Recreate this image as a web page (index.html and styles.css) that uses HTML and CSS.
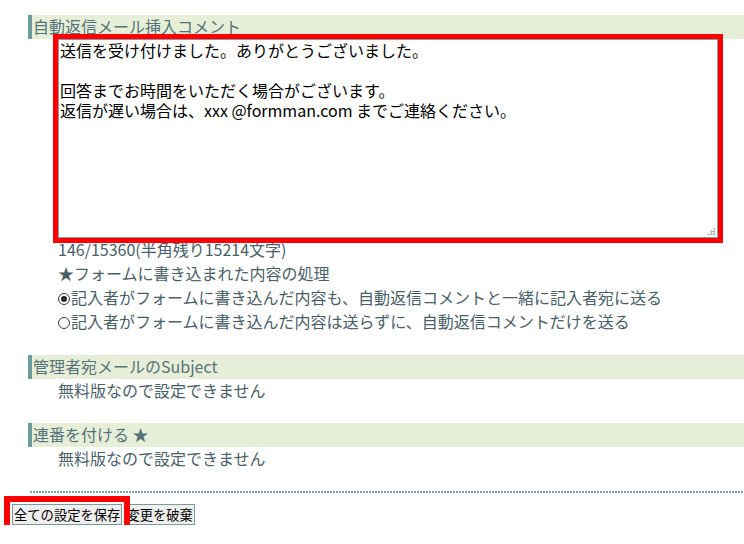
FILE: index.html
```html
<!DOCTYPE html>
<html lang="ja">
<head>
<meta charset="utf-8">
<title>設定</title>
<link rel="stylesheet" href="styles.css">
</head>
<body>
<div class="page">
  <section class="sec sec-first">
    <h2 class="sec-title">自動返信メール挿入コメント</h2>
    <div class="sec-body">
      <div class="ta-wrap">
        <textarea class="ta">送信を受け付けました。ありがとうございました。

回答までお時間をいただく場合がございます。
返信が遅い場合は、xxx @formman.com までご連絡ください。</textarea>
        <span class="grip"></span>
      </div>
      <p class="line">146/15360(半角残り15214文字)</p>
      <p class="line">★フォームに書き込まれた内容の処理</p>
      <p class="line"><span class="radio checked"></span>記入者がフォームに書き込んだ内容も、自動返信コメントと一緒に記入者宛に送る</p>
      <p class="line"><span class="radio"></span>記入者がフォームに書き込んだ内容は送らずに、自動返信コメントだけを送る</p>
    </div>
  </section>
  <section class="sec">
    <h2 class="sec-title">管理者宛メールのSubject</h2>
    <div class="sec-body">
      <p class="line">無料版なので設定できません</p>
    </div>
  </section>
  <section class="sec">
    <h2 class="sec-title">連番を付ける ★</h2>
    <div class="sec-body">
      <p class="line">無料版なので設定できません</p>
    </div>
  </section>
  <div class="sep"></div>
  <div class="actions">
    <button class="btn btn-save" type="button">全ての設定を保存</button><button class="btn btn-discard" type="button">変更を破棄</button>
  </div>
</div>
</body>
</html>
```

FILE: styles.css
```css
html, body {
  margin: 0;
  padding: 0;
  background: #ffffff;
}
body {
  font-family: "Noto Sans CJK JP", "Noto Sans", sans-serif;
  font-size: 16px;
  color: #4a6068;
}
.page {
  padding: 15px 0 0 28px;
}
.sec {
  margin: 0 0 20px 0;
}
.sec-first {
  margin-bottom: 21px;
}
.sec-title {
  margin: 0;
  height: 22px;
  line-height: 22px;
  padding-bottom: 2px;
  font-size: 16px;
  font-weight: normal;
  color: #557279;
  background: #e6eed8;
  border-left: 4px solid #6a9c9c;
  padding-left: 1px;
  white-space: nowrap;
}
.sec-body {
  padding-left: 30px;
}
.line {
  margin: 0;
  height: 22px;
  line-height: 22px;
  padding-bottom: 2px;
  white-space: nowrap;
}
.ta-wrap {
  position: relative;
  width: 660px;
  height: 199px;
  outline: 5px solid #ff0000;
}
.ta {
  display: block;
  box-sizing: border-box;
  width: 660px;
  height: 199px;
  margin: 0;
  padding: 0 1px;
  border: 1px solid #8a9a9e;
  resize: none;
  font-family: "Noto Sans CJK JP", sans-serif;
  font-weight: 400;
  font-size: 16px;
  line-height: 20px;
  color: #000000;
  background: #ffffff;
  overflow: hidden;
}
.grip {
  position: absolute;
  right: 3px;
  bottom: 3px;
  width: 8px;
  height: 8px;
  background:
    radial-gradient(circle, #b0b0b0 1.2px, transparent 1.3px) 0 0 / 3px 3px;
  clip-path: polygon(100% 0, 100% 100%, 0 100%);
}
.radio {
  display: inline-block;
  box-sizing: border-box;
  width: 12px;
  height: 12px;
  border: 1px solid #3a3a3a;
  border-radius: 50%;
  vertical-align: -1px;
  margin-right: 1px;
  position: relative;
}
.radio.checked::after {
  content: "";
  position: absolute;
  left: 2px;
  top: 2px;
  width: 6px;
  height: 6px;
  border-radius: 50%;
  background: #2a2a2a;
}
.sep {
  height: 2px;
  margin-left: 2px;
  background-image: linear-gradient(to right, #7fa9a8 0, #7fa9a8 2px, transparent 2px);
  background-size: 3px 2px;
  background-repeat: repeat-x;
}
.actions {
  margin-top: 11px;
  margin-left: -16px;
  display: flex;
  align-items: flex-start;
}
.btn {
  box-sizing: border-box;
  height: 21px;
  margin: 0;
  padding: 0 1px;
  border: 1px solid #7a9a9a;
  background: #efefef;
  color: #000000;
  font-family: "Noto Sans CJK JP", sans-serif;
  font-size: 13.3px;
  line-height: 17px;
  white-space: nowrap;
}
.btn-save {
  position: relative;
  z-index: 1;
  outline: 6px solid #ff0000;
  outline-offset: 2px;
}
.btn-discard {
  margin-left: 2px;
}
```
